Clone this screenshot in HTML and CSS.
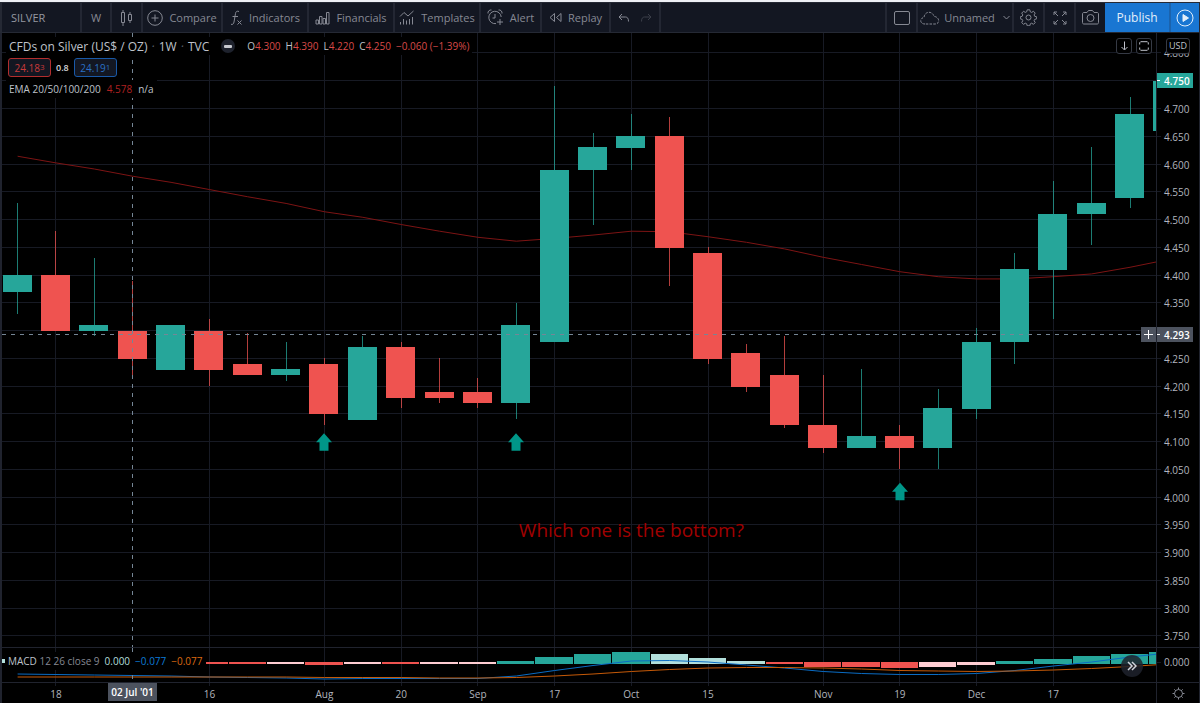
FILE: index.html
```html
<!DOCTYPE html>
<html lang="en">
  <head>
    <meta charset="UTF-8" />
    <meta name="viewport" content="width=device-width, initial-scale=1.0" />
    <title>SILVER 4.750</title>
    <link rel="stylesheet" href="styles.css">
  </head>
  <body>
    <div class="app">
      <header class="toolbar">
        <button class="tool tool-symbol">SILVER</button>
        <button class="tool tool-interval">W</button>
        <button class="tool tool-icon" aria-label="Chart type">
          <svg width="14" height="18" viewBox="0 0 14 18"><path d="M1.5 3.5h3v10h-3zM3 1v2.5M3 13.5V17M8.500 5.500h3v6h-3zM10 3v2.500M10 11.500V14" /></svg>
        </button>
        <button class="tool tool-compare">
          <svg width="16" height="16" viewBox="0 0 16 16"><circle cx="8" cy="8" r="7.300" /><path d="M8 4.500v7M4.500 8h7" /></svg>
          Compare
        </button>
        <button class="tool tool-wide">
          <svg width="13" height="16" viewBox="0 0 13 16"><path d="M9 1.500c-2-.8-3.200 0-3.500 2L4 12c-.3 2-1.300 2.800-3 2.300M2.500 6.500H8M7.500 10.500l4 4M11.500 10.500l-4 4" /></svg>
          Indicators
        </button>
        <button class="tool tool-wide">
          <svg width="15" height="14" viewBox="0 0 15 14"><path d="M1 9h2.500v4H1zM4.500 5.500H7V13H4.500zM8 7.500h2.500V13H8zM11.500 1.500h2.500V13h-2.500z" /></svg>
          Financials
        </button>
        <button class="tool tool-wide">
          <svg width="16" height="16" viewBox="0 0 16 16"><path d="M1 6.500l4-4 4 3.500 5.500-5M1.500 12v2.500M4.500 9v5.500M7.500 10.500v4M10.500 9v5.500M13.500 7v7.500" /></svg>
          Templates
        </button>
        <button class="tool tool-alert">
          <svg width="17" height="17" viewBox="0 0 17 17"><path d="M14.200 8A6.200 6.200 0 1 0 9 14.600M8 5v4H5.500M1 4.500C.5 2.500 2.500.500 4.500 1M15 4.500c.5-2-1.500-4-3.500-3.500M13 10v6M10 13h6" /></svg>
          Alert
        </button>
        <button class="tool tool-replay">
          <svg width="13" height="11" viewBox="0 0 13 11"><path d="M5.500 1.500v8L1 5.500zM12 1.500v8L7.500 5.500z" /></svg>
          Replay
        </button>
        <div class="tool tool-history">
          <button class="bare" aria-label="Undo">
            <svg width="12" height="10" viewBox="0 0 12 10"><path d="M4 1L1 4l3 3M1 4h6.500c2 0 3 1.500 3 4.500" /></svg>
          </button>
          <button class="bare faded" aria-label="Redo">
            <svg width="12" height="10" viewBox="0 0 12 10"><path d="M8 1l3 3-3 3M11 4H4.500c-2 0-3 1.500-3 4.500" /></svg>
          </button>
        </div>
        <div class="tools-right">
          <button class="tool tool-icon" aria-label="Layout">
            <svg width="16" height="14" viewBox="0 0 16 14"><rect x=".5" y=".5" width="15" height="13" rx="1.500" /></svg>
          </button>
          <button class="tool tool-name">
            <svg width="20" height="14" viewBox="0 0 20 14"><path stroke-dasharray="2.500 1.200" d="M5 13C-.5 13-.5 7 4 6.500 4.500 0 12.500-.5 14 5.500c5.500 0 6.500 7.500 1 7.500z" /></svg>
            Unnamed
            <svg class="caret" width="7" height="5" viewBox="0 0 7 5"><path d="M.5 1l3 3 3-3" /></svg>
          </button>
          <button class="tool tool-icon" aria-label="Settings">
            <svg width="17" height="17" viewBox="0 0 17 17"><circle cx="8.500" cy="8.500" r="2.500" /><path d="M7.200.8h2.600l.5 2 1.300.6 1.900-1.100 1.700 1.800-1.100 1.800.6 1.400 2 .5v2l-2 .6-.6 1.300 1.100 1.900-1.700 1.700-1.900-1.100-1.300.6-.5 2H7.200l-.5-2-1.400-.6-1.800 1.100-1.800-1.700 1.100-1.900-.6-1.300-1.900-.6v-2l1.900-.5.6-1.400-1.100-1.800 1.800-1.800 1.800 1.100 1.400-.6z" /></svg>
          </button>
          <button class="tool tool-icon" aria-label="Fullscreen">
            <svg width="14" height="14" viewBox="0 0 14 14"><path d="M1 4V1h3M1 1l4 4M10 1h3v3M13 1L9 5M1 10v3h3M1 13l4-4M10 13h3v-3M13 13L9 9" /></svg>
          </button>
          <button class="tool tool-icon" aria-label="Snapshot">
            <svg width="17" height="15" viewBox="0 0 17 15"><path d="M2 2.500h3L6.500.500h4l1.500 2h3c1 0 1.500.5 1.500 1.500v8.500c0 1-.5 1.500-1.500 1.500H2C1 14 .5 13.500.5 12.500V4C.5 3 1 2.500 2 2.500z" /><circle cx="8.500" cy="8" r="3.500" /></svg>
          </button>
        </div>
        <button class="publish">Publish</button>
        <button class="publish publish-play" aria-label="Start stream">
          <svg width="18" height="18" viewBox="0 0 18 18"><circle cx="9" cy="9" r="8" /><path class="solid" d="M7 5.500v7L12.500 9z" /></svg>
        </button>
      </header>

      <main class="chart">
        <section class="pane">
          <svg id="price" class="plot"></svg>
          <div class="legend">
            <div class="legend-row legend-title">
              <span>CFDs on Silver (US$ / OZ) <i>·</i> 1W <i>·</i> TVC</span>
              <span class="status"></span>
              <span class="ohlc">
                <span>O<b>4.300</b></span>
                <span>H<b>4.390</b></span>
                <span>L<b>4.220</b></span>
                <span>C<b>4.250</b></span>
                <b>−0.060 (−1.39%)</b>
              </span>
            </div>
            <div class="legend-row legend-quote">
              <button class="quote sell">24.18<sup>3</sup></button>
              <span class="spread">0.8</span>
              <button class="quote buy">24.19<sup>1</sup></button>
            </div>
            <div class="legend-row legend-ema">
              <span>EMA 20/50/100/200</span>
              <em>4.578</em>
              <span>n/a</span>
            </div>
          </div>
          <div class="pane-actions">
            <button aria-label="Move pane down">
              <svg width="9" height="10" viewBox="0 0 9 10"><path d="M4.500 .5v8M1.500 6l3 3 3-3" /></svg>
            </button>
            <button aria-label="Maximize pane">
              <svg width="10" height="10" viewBox="0 0 10 10"><path d="M.7 3.500V1.700l1-1h6.600l1 1v1.800M.7 6.500v1.800l1 1h6.600l1-1V6.500" /></svg>
            </button>
          </div>
        </section>
        <section class="axis">
          <svg id="priceAxis" class="plot"></svg>
          <button class="currency">USD</button>
        </section>

        <section class="pane pane-macd">
          <svg id="macd" class="plot"></svg>
          <div class="legend-macd">
            <span>MACD <span class="params">12 26 close 9</span></span>
            <span class="hist">0.000</span>
            <span class="fast">−0.077</span>
            <span class="slow">−0.077</span>
          </div>
          <button class="scroll-end" aria-label="Scroll to latest bar">
            <svg width="10" height="10" viewBox="0 0 10 10"><path stroke-width="1.500" d="M1 1l4 4-4 4M5 1l4 4-4 4" /></svg>
          </button>
        </section>
        <section class="axis pane-macd">
          <svg id="macdAxis" class="plot"></svg>
        </section>

        <section class="time"><svg id="time" class="plot"></svg></section>
        <section class="time time-end">
          <button class="bare" aria-label="Scale settings">
            <svg width="13" height="13" viewBox="0 0 13 13"><circle cx="6.500" cy="6.500" r="4" /><path d="M6.500 .5v2M6.500 10.500v2M.5 6.500h2M10.500 6.500h2M2.300 2.300l1.400 1.400M9.300 9.300l1.400 1.400M2.300 10.700l1.400-1.400M9.300 3.700l1.400-1.400" /></svg>
          </button>
        </section>
      </main>
    </div>
    <script src="chart.js"></script>
  </body>
</html>
```
FILE: styles.css
```css
* {
  box-sizing: border-box;
}
body {
  margin: 0;
  background: #000;
  color: #bfc2ca;
  font-family: "Open Sans", "Noto Sans", sans-serif;
  font-size: 11px;
}
button {
  margin: 0;
  padding: 0;
  border: 0;
  background: none;
  color: inherit;
  font: inherit;
  cursor: pointer;
}
svg {
  display: block;
  flex: none;
  fill: none;
  stroke: currentColor;
}
.app {
  height: 100vh;
  display: flex;
  flex-direction: column;
  border-top: 2px solid #eef0f5;
}

/* top toolbar */
.toolbar {
  height: 31px;
  flex: none;
  display: flex;
  background: #131722;
  border: 1px solid #252934;
  border-width: 1px 1px 1px 2px;
  color: #868993;
}
.tool {
  display: flex;
  align-items: center;
  justify-content: center;
  gap: 6px;
  border-right: 2px solid #232733;
  white-space: nowrap;
}
.tool-symbol {
  width: 80px;
  padding-left: 9px;
  justify-content: flex-start;
  color: #9598a1;
}
.tool-interval {
  width: 30px;
}
.tool-icon {
  width: 31px;
}
.tool-compare {
  width: 80px;
}
.tool-wide {
  width: 86px;
}
.tool-alert {
  width: 61px;
}
.tool-replay {
  width: 69px;
}
.tool-history {
  width: 50px;
  gap: 10px;
}
.faded {
  opacity: 0.35;
}
.tools-right {
  display: flex;
  margin-left: auto;
}
.tools-right .tool {
  border-right: 0;
  border-left: 2px solid #232733;
}
.tool-name {
  width: 96px;
  gap: 4px;
}
.caret {
  margin-left: 4px;
}
.publish {
  width: 64px;
  background: #1976d2;
  color: #e3effa;
  font-size: 12px;
}
.publish-play {
  width: 30px;
  display: flex;
  align-items: center;
  justify-content: center;
  border-left: 2px solid #1b63ad;
}
.solid {
  fill: currentColor;
}

/* chart area */
.chart {
  flex: 1;
  min-height: 0;
  display: grid;
  grid-template-columns: 1fr 43px;
  grid-template-rows: 1fr 35px 21px;
  border-left: 2px solid #20232e;
  border-right: 1px solid #20232e;
}
.pane,
.axis,
.time {
  position: relative;
  min-width: 0;
  min-height: 0;
  overflow: hidden;
}
.axis,
.time-end {
  border-left: 1px solid #20232e;
}
.pane-macd,
.time {
  border-top: 1px solid #20232e;
}
.plot {
  width: 100%;
  height: 100%;
  stroke: none;
}
.plot text {
  font-size: 10px;
  fill: #b2b5be;
}
.plot .tag {
  fill: #fff;
  font-weight: 600;
}
.plot .note {
  font-size: 19px;
  fill: #a00000;
}
.grid {
  stroke: #171a24;
}
.mark {
  stroke: #fff;
}
.up {
  fill: #26a69a;
  stroke: #26a69a;
}
.down {
  fill: #ef5350;
  stroke: #ef5350;
}
.up-light {
  fill: #b2dfdb;
}
.down-light {
  fill: #ffcdd2;
}
.plot rect {
  stroke: none;
}
.wick {
  opacity: 0.75;
}
.ema {
  fill: none;
  stroke: #7d1414;
}
.macd-line {
  fill: none;
  stroke: #0a6cc4;
}
.signal-line {
  fill: none;
  stroke: #c65a08;
}
.cross {
  stroke: #758696;
  stroke-dasharray: 4 5;
}
.marker {
  fill: #009688;
}
.cursor-tag {
  fill: #4c525e;
}

/* legends over the panes */
.legend {
  position: absolute;
  top: 4px;
  left: 4px;
}
.legend-row {
  width: max-content;
  display: flex;
  align-items: center;
  padding: 0 3px;
  background: #000;
  white-space: nowrap;
}
.legend-title {
  height: 18px;
  font-size: 12px;
}
.legend-title i {
  margin: 0 1px;
  color: #5d606b;
}
.status {
  width: 14px;
  height: 14px;
  margin: 0 12px;
  display: flex;
  align-items: center;
  justify-content: center;
  border-radius: 50%;
  background: #1e222d;
}
.status::before {
  content: "";
  width: 8px;
  height: 3px;
  border-radius: 1px;
  background: #c8cad0;
}
.ohlc {
  display: flex;
  gap: 5px;
  font-size: 10px;
}
.ohlc b {
  color: #d94a48;
  font-weight: normal;
}
.legend-quote {
  height: 25px;
  padding-left: 2px;
  gap: 5px;
}
.quote {
  width: 43px;
  height: 19px;
  border: 1px solid #b22e2e;
  border-radius: 3px;
  background: #131722;
  color: #c93a3a;
  font-size: 10px;
  line-height: 16px;
}
.quote sup {
  font-size: 8px;
  line-height: 8px;
  vertical-align: 2px;
}
.quote.buy {
  border-color: #1959a8;
  color: #2a70c4;
}
.spread {
  color: #d5d7dc;
  font-size: 9px;
  font-weight: 600;
}
.legend-ema {
  height: 18px;
  gap: 6px;
  font-size: 10px;
}
.legend-ema em {
  color: #b02020;
  font-style: normal;
}
.pane-actions {
  position: absolute;
  top: 5px;
  right: 4px;
  display: flex;
  gap: 4px;
}
.pane-actions button,
.currency {
  height: 16px;
  border: 1px solid #363a45;
  border-radius: 3px;
  background: #000;
}
.pane-actions button {
  width: 16px;
  display: flex;
  align-items: center;
  justify-content: center;
}
.currency {
  position: absolute;
  top: 5px;
  left: 9px;
  width: 24px;
  font-size: 9px;
  line-height: 14px;
}
.legend-macd {
  position: absolute;
  top: 4px;
  left: 0;
  display: flex;
  gap: 5px;
  padding: 0 3px 0 6px;
  background: #000;
  font-size: 10px;
  line-height: 18px;
  white-space: nowrap;
}
.legend-macd::before {
  content: "";
  position: absolute;
  top: 7px;
  left: 0;
  width: 3px;
  height: 4px;
  background: #b2dfdb;
}
.params {
  color: #868993;
}
.hist {
  color: #b2dfdb;
}
.fast {
  color: #0c7bd8;
}
.slow {
  color: #dd6a12;
}
.scroll-end {
  position: absolute;
  top: 7px;
  right: 13px;
  width: 22px;
  height: 22px;
  display: flex;
  align-items: center;
  justify-content: center;
  border-radius: 50%;
  background: rgba(30, 34, 45, 0.85);
  color: #d1d4dc;
}
.time-end {
  display: flex;
  align-items: center;
  justify-content: center;
  color: #868993;
}
```
FILE: chart.js
```js
const TOP = 4.836
const BOTTOM = 3.73
const STEP = 38.36
const LAST = 30

// open, close, high, low
const candles = [
  [4.37, 4.4, 4.53, 4.33],
  [4.4, 4.3, 4.48, 4.3],
  [4.3, 4.31, 4.43, 4.29],
  [4.3, 4.25, 4.39, 4.22],
  [4.23, 4.31, 4.31, 4.23],
  [4.3, 4.23, 4.32, 4.2],
  [4.24, 4.22, 4.295, 4.22],
  [4.22, 4.23, 4.28, 4.21],
  [4.24, 4.15, 4.25, 4.13],
  [4.14, 4.27, 4.29, 4.14],
  [4.27, 4.18, 4.28, 4.16],
  [4.19, 4.18, 4.25, 4.17],
  [4.19, 4.17, 4.215, 4.16],
  [4.17, 4.31, 4.35, 4.14],
  [4.28, 4.59, 4.74, 4.28],
  [4.59, 4.63, 4.655, 4.49],
  [4.63, 4.65, 4.69, 4.59],
  [4.65, 4.45, 4.685, 4.38],
  [4.44, 4.25, 4.45, 4.24],
  [4.26, 4.2, 4.275, 4.19],
  [4.22, 4.13, 4.29, 4.125],
  [4.13, 4.09, 4.22, 4.08],
  [4.09, 4.11, 4.23, 4.09],
  [4.11, 4.09, 4.13, 4.05],
  [4.09, 4.16, 4.195, 4.05],
  [4.16, 4.28, 4.305, 4.14],
  [4.28, 4.41, 4.44, 4.24],
  [4.41, 4.51, 4.57, 4.32],
  [4.51, 4.53, 4.63, 4.455],
  [4.54, 4.69, 4.72, 4.52],
  [4.66, 4.75, 4.75, 4.66],
]
const ema = [
  4.614, 4.602, 4.591, 4.578, 4.567, 4.554, 4.541, 4.529, 4.514, 4.504, 4.491,
  4.479, 4.468, 4.461, 4.466, 4.472, 4.479, 4.478, 4.469, 4.459, 4.447, 4.432,
  4.419, 4.406, 4.397, 4.393, 4.393, 4.397, 4.402, 4.414, 4.428,
]
const hist = [
  -1, -1, -1, -1, -1, -1, -1, -1, -2, -1, -1, -1, -1, 2, 6, 9, 11, 9, 5, 2,
  -1, -4, -4, -5, -4, -2, 2, 4, 7, 9, 11,
]
const lighter = [7, 9, 11, 12, 17, 18, 19, 24, 25]
const macdLine = [
  -11, -11.5, -12, -12.5, -13, -14, -14.5, -15, -16, -15.5, -15.5, -15.5, -15.5,
  -13, -7.5, -2.5, 2, 2.5, 1, -2, -5, -8.5, -10.5, -11.5, -11.5, -10.5, -7.5,
  -3, 1, 6, 10,
]
const signalLine = [
  -14, -14, -14, -14, -14, -14, -14, -14, -14.5, -14.5, -14.5, -15, -15, -14.5,
  -13, -11, -8.5, -6.5, -5, -4.5, -4.5, -5, -6, -7.5, -8, -8.5, -8, -7, -5.5,
  -3.5, -1,
]
const dates = { 1: '18', 5: '16', 8: 'Aug', 10: '20', 12: 'Sep', 14: '17', 16: 'Oct', 18: '15', 21: 'Nov', 23: '19', 25: 'Dec', 27: '17' }
// bar index, price at the tip
const markers = [[8, 4.115], [13, 4.115], [23, 4.026]]
const lastPrice = 4.75
const cursor = { bar: 3, price: 4.293, date: "02 Jul '01" }

const $ = (id) => document.getElementById(id)
const hline = (y, x1, x2, cls) => `<line class="${cls}" x1="${x1}" x2="${x2}" y1="${y}" y2="${y}"/>`
const vline = (x, y1, y2, cls) => `<line class="${cls}" x1="${x}" x2="${x}" y1="${y1}" y2="${y2}"/>`
const rect = (x, y, w, h, cls) => `<rect class="${cls}" x="${x}" y="${y}" width="${w}" height="${h}"/>`
const text = (x, y, s, cls = '', anchor = 'start') =>
  `<text class="${cls}" x="${x}" y="${y}" text-anchor="${anchor}">${s}</text>`
const snap = (v) => Math.floor(v) + 0.5

function draw() {
  const w = $('price').clientWidth
  const h = $('price').clientHeight
  const mh = $('macd').clientHeight
  const barX = (i) => w + 12.4 - (LAST - i) * STEP
  const priceY = (p) => ((TOP - p) / (TOP - BOTTOM)) * h
  const line = (values, y, cls) =>
    `<polyline class="${cls}" points="${values.map((v, i) => barX(i) + ',' + y(v)).join(' ')}"/>`
  const gridBars = Object.keys(dates).map(Number)

  // price pane
  let out = ''
  let labels = ''
  for (let n = 75; n <= 96; n++) {
    const p = n / 20
    const y = snap(priceY(p))
    out += hline(y, 0, w, 'grid')
    labels += hline(y, 0, 4, 'grid')
    // labels under the price tags are left out
    const covered = [lastPrice, cursor.price].some((t) => Math.abs(t - p) < 0.015)
    if (!covered) labels += text(7, y + 4, p.toFixed(3))
  }
  gridBars.forEach((i) => (out += vline(snap(barX(i)), 0, h, 'grid')))
  out += line(ema, priceY, 'ema')
  candles.forEach(([open, close, high, low], i) => {
    const cls = close > open ? 'up' : 'down'
    const x = snap(barX(i))
    const top = Math.round(priceY(Math.max(open, close)))
    const bottom = Math.ceil(priceY(Math.min(open, close)))
    out += vline(x, Math.round(priceY(high)), top, cls + ' wick')
    out += vline(x, bottom, Math.round(priceY(low)), cls + ' wick')
    out += rect(Math.round(barX(i) - 15), top, 29, bottom - top, cls)
  })
  markers.forEach(([i, p]) => {
    out += `<path class="marker" transform="translate(${Math.round(barX(i))} ${priceY(p)})" d="M0 0l8 9H4.500v8.500h-9V9H-8z"/>`
  })
  out += text(barX(16), priceY(3.928), 'Which one is the bottom?', 'note', 'middle')
  const cx = snap(barX(cursor.bar))
  const cy = snap(priceY(cursor.price))
  out += vline(cx, 0, h, 'cross') + hline(cy, 0, w, 'cross')
  out += rect(w - 15, cy - 7.5, 15, 15, 'cursor-tag')
  out += `<path class="mark" d="M${w - 12} ${cy}h9M${w - 7.5} ${cy - 4.5}v9"/>`
  $('price').innerHTML = out

  // price scale
  const ly = snap(priceY(lastPrice))
  labels += rect(0, ly - 7.5, 36, 15, 'up') + hline(ly, 0, 3, 'mark') + text(7, ly + 4, lastPrice.toFixed(3), 'tag')
  labels += rect(0, cy - 7.5, 36, 15, 'cursor-tag') + hline(cy, 0, 3, 'mark') + text(7, cy + 4, cursor.price, 'tag')
  $('priceAxis').innerHTML = labels

  // macd pane
  const zero = 15
  const macdY = (v) => zero - v
  out = ''
  gridBars.forEach((i) => (out += vline(snap(barX(i)), 0, mh, 'grid')))
  hist.forEach((v, i) => {
    const light = lighter.includes(i) ? '-light' : ''
    const x = Math.round(barX(i) - STEP / 2)
    const next = Math.round(barX(i + 1) - STEP / 2)
    out += rect(x, v > 0 ? zero - v : zero - 1, next - x - 1, Math.abs(v) + 1, (v > 0 ? 'up' : 'down') + light)
  })
  out += line(macdLine, macdY, 'macd-line') + line(signalLine, macdY, 'signal-line')
  out += vline(cx, 0, mh, 'cross')
  $('macd').innerHTML = out
  $('macdAxis').innerHTML = hline(zero - 0.5, 0, 4, 'grid') + text(7, zero + 3, '0.000')

  // time scale
  out = ''
  gridBars.forEach((i) => {
    out += vline(snap(barX(i)), 0, 3, 'grid') + text(barX(i), 15, dates[i], '', 'middle')
  })
  out += rect(cx - 24.5, 0, 49, 18, 'cursor-tag') + text(cx, 13, cursor.date, 'tag', 'middle')
  $('time').innerHTML = out
}

draw()
window.addEventListener('resize', draw)
```
